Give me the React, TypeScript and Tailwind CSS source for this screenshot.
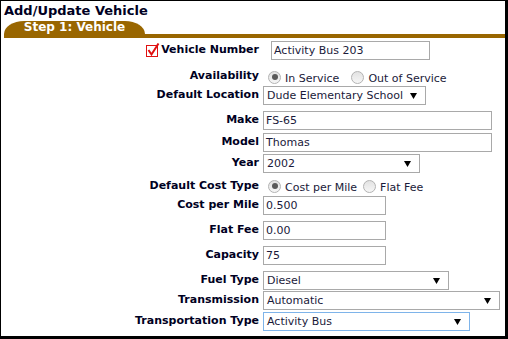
import React from 'react';

const font = { fontFamily: '"DejaVu Sans", Verdana, sans-serif' };

const Arrow: React.FC = () => (
  <svg width="7" height="6" viewBox="0 0 7 6" className="shrink-0">
    <polygon points="0,0 7,0 3.5,6" fill="#000" />
  </svg>
);

const TextBox: React.FC<{ value: string; w: string; extra?: string }> = ({ value, w, extra = '' }) => (
  <div className={`${w} ${extra} h-[19px] border border-[#a9a9a9] bg-white px-[2px] text-[11px] leading-[17px] text-[#1a1a3a]`}>
    {value}
  </div>
);

const SelectBox: React.FC<{ value: string; w: string; focus?: boolean }> = ({ value, w, focus }) => (
  <div
    className={`${w} h-[19px] flex items-center justify-between border ${
      focus ? 'border-[#7eb4ea]' : 'border-[#a9a9a9]'
    } bg-white pl-[3px] pr-[8px] text-[11px] leading-[17px] text-[#1a1a3a]`}
  >
    <span>{value}</span>
    <Arrow />
  </div>
);

const Radio: React.FC<{ checked?: boolean; label: string }> = ({ checked, label }) => (
  <div className="flex items-center">
    <span className="w-[13px] h-[13px] rounded-full border border-[#b3b3b3] bg-gradient-to-b from-[#e2e2e2] to-[#f6f6f6] flex items-center justify-center">
      {checked && <span className="w-[6px] h-[6px] rounded-full bg-[#5a5a5a]" />}
    </span>
    <span className="ml-[4px] mt-[3px] text-[11px] leading-[13px] text-[#1a1a3a]">{label}</span>
  </div>
);

const Required: React.FC = () => (
  <svg width="14" height="15" viewBox="0 0 14 15" className="mr-[1px] mt-[2px]">
    <rect x="0.5" y="2.5" width="11" height="11" fill="none" stroke="#e01010" strokeWidth="1" />
    <path d="M2.5 7 L5.5 11.5 L12.5 0.5" fill="none" stroke="#e01010" strokeWidth="2" />
  </svg>
);

const Row: React.FC<{ label: string; h: string; req?: boolean; children: React.ReactNode }> = ({ label, h, req, children }) => (
  <div className={`flex items-start ${h}`}>
    <div className="w-[258px] flex justify-end items-start">
      {req && <Required />}
      <span className="pt-[2px] text-[11px] leading-[13px] font-bold text-[#000022] whitespace-nowrap">{label}</span>
    </div>
    <div className="ml-[4px] flex">{children}</div>
  </div>
);

export default function App() {
  return (
    <div
      style={font}
      className="w-[508px] h-[339px] bg-white border-l border-t border-r-[3px] border-b-[3px] border-black overflow-hidden"
    >
      <div className="pl-[3px] pt-[2px] text-[13px] leading-[16px] font-bold text-[#000022]">Add/Update Vehicle</div>
      <div className="mt-[2px] ml-[3px] border-b-[4px] border-[#996600]">
        <div className="w-[141px] h-[13px] bg-[#996600] rounded-tl-[20px_13px] rounded-tr-[20px_13px] text-center text-[12px] leading-[13px] font-bold text-white">
          Step 1: Vehicle
        </div>
      </div>

      <div className="mt-[3px] flex flex-col">
        <Row label="Vehicle Number" h="h-[26px]" req>
          <TextBox value="Activity Bus 203" w="w-[159px]" extra="ml-[8px]" />
        </Row>
        <Row label="Availability" h="h-[19px]">
          <div className="flex items-start gap-[12px] pl-[5px] pt-[2px]">
            <Radio checked label="In Service" />
            <Radio label="Out of Service" />
          </div>
        </Row>
        <Row label="Default Location" h="h-[25px]">
          <SelectBox value="Dude Elementary School" w="w-[163px]" />
        </Row>
        <Row label="Make" h="h-[22px]">
          <TextBox value="FS-65" w="w-[229px]" />
        </Row>
        <Row label="Model" h="h-[21px]">
          <TextBox value="Thomas" w="w-[229px]" />
        </Row>
        <Row label="Year" h="h-[23px]">
          <SelectBox value="2002" w="w-[157px]" />
        </Row>
        <Row label="Default Cost Type" h="h-[19px]">
          <div className="flex items-start gap-[6px] pl-[5px] pt-[1px]">
            <Radio checked label="Cost per Mile" />
            <Radio label="Flat Fee" />
          </div>
        </Row>
        <Row label="Cost per Mile" h="h-[25px]">
          <TextBox value="0.500" w="w-[123px]" />
        </Row>
        <Row label="Flat Fee" h="h-[25px]">
          <TextBox value="0.00" w="w-[123px]" />
        </Row>
        <Row label="Capacity" h="h-[25px]">
          <TextBox value="75" w="w-[123px]" />
        </Row>
        <Row label="Fuel Type" h="h-[20px]">
          <SelectBox value="Diesel" w="w-[186px]" />
        </Row>
        <Row label="Transmission" h="h-[21px]">
          <SelectBox value="Automatic" w="w-[237px]" />
        </Row>
        <Row label="Transportation Type" h="h-[21px]">
          <SelectBox value="Activity Bus" w="w-[207px]" focus />
        </Row>
      </div>
    </div>
  );
}
